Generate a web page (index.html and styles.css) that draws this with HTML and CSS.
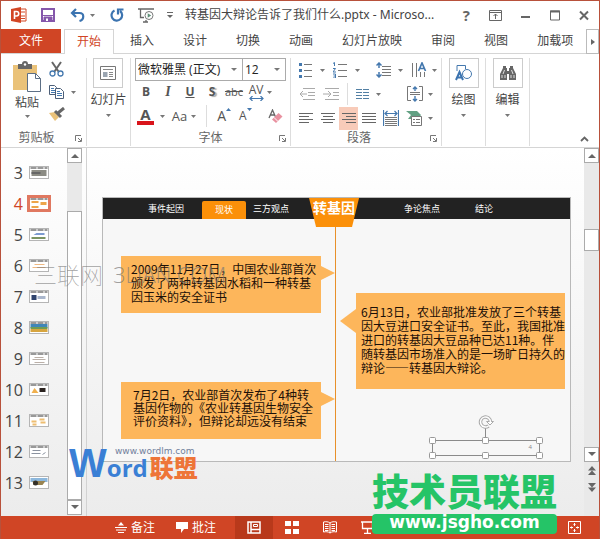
FILE: index.html
```html
<!DOCTYPE html>
<html lang="zh-CN">
<head>
    <meta charset="UTF-8">
    <meta name="viewport" content="width=device-width, initial-scale=1.0">
    <title>转基因大辩论告诉了我们什么.pptx</title>
    <link rel="stylesheet" href="styles.css">
</head>
<body>
    <div class="window">

        <header class="titlebar">
            <svg class="app-icon" width="16" height="16" viewBox="0 0 16 16"><path d="M8 2h7v12H8z" fill="#fff" stroke="#d24625"/><path d="M10 5h4M10 9h4M10 11.500h4" stroke="#d24625"/><path d="M0 2l10-2v16L0 14z" fill="#d24625"/><path d="M3.500 12V4.500H5.500a2 2 0 0 1 0 4.500H3.500" fill="none" stroke="#fff" stroke-width="1.600"/></svg>
            <button class="icon-btn save" aria-label="保存"><svg width="14" height="14" viewBox="0 0 14 14"><path d="M1 1h12v12H1z" fill="none" stroke="#8557ab" stroke-width="2"/><path d="M2 7.500h10M3 9h8v4H3z" stroke="#8557ab" fill="#8557ab"/><path d="M5 10.500h2V13H5z" fill="#fff"/></svg></button>
            <button class="icon-btn undo" aria-label="撤消"><svg width="15" height="14" viewBox="0 0 15 14"><path d="M6 1L2 5l4 4M2 5h7.500c5 0 5 6.500 0 8" fill="none" stroke="#3c74b0" stroke-width="2.200"/></svg><svg class="caret" viewBox="0 0 5 3"><path d="M0 0h5L2.500 3z"/></svg></button>
            <button class="icon-btn redo" aria-label="重复"><svg width="14" height="14" viewBox="0 0 14 14"><path d="M4.500 2.500a5.300 5.300 0 1 0 5.500.5M8 6.500V1.500h5.500" fill="none" stroke="#3c74b0" stroke-width="2.200"/></svg></button>
            <button class="icon-btn show" aria-label="从头开始"><svg width="17" height="15" viewBox="0 0 17 15"><path d="M0 1h16M2.500 1v8.500H6M5 14h5M8 12v2" fill="none" stroke="#666" stroke-width="1.300"/><circle cx="11" cy="7.500" r="4" fill="#fff" stroke="#777"/><path d="M9.700 5.300v4.400l3.500-2.200z" fill="#5f8f78"/></svg></button>
            <button class="icon-btn more" aria-label="自定义"><svg width="6" height="6" viewBox="0 0 6 6"><path d="M0 .5h6" stroke="#666"/><path d="M0 3h6L3 6z" fill="#666"/></svg></button>
            <h1>转基因大辩论告诉了我们什么.pptx - Microso...</h1>
            <div class="window-buttons">
                <button class="help" aria-label="帮助">?</button>
                <button aria-label="功能区选项"><svg width="13" height="11" viewBox="0 0 13 11"><path d="M.5.5h12v10H.5zM.5 2.500h12M6.500 9V4M4.500 6l2-2 2 2" fill="none" stroke="#666"/></svg></button>
                <button aria-label="最小化"><svg width="10" height="11" viewBox="0 0 10 11"><path d="M0 7h9" stroke="#666" stroke-width="2"/></svg></button>
                <button aria-label="最大化"><svg width="10" height="11" viewBox="0 0 10 11"><path d="M.5 1h9v9h-9z" fill="none" stroke="#666"/><path d="M0 1.500h10" stroke="#666" stroke-width="2"/></svg></button>
                <button aria-label="关闭"><svg width="10" height="11" viewBox="0 0 10 11"><path d="M1 1.500l8 8M9 1.500l-8 8" stroke="#666" stroke-width="2"/></svg></button>
            </div>
        </header>

        <nav class="tabs">
            <button class="tab file">文件</button>
            <button class="tab active">开始</button>
            <button class="tab">插入</button>
            <button class="tab">设计</button>
            <button class="tab">切换</button>
            <button class="tab">动画</button>
            <button class="tab">幻灯片放映</button>
            <button class="tab">审阅</button>
            <button class="tab">视图</button>
            <button class="tab last">加载项</button>
            <button class="tab-scroll" aria-label="更多选项卡"><svg width="4" height="6" viewBox="0 0 4 6"><path d="M0 0l4 3-4 3z" fill="#666"/></svg></button>
        </nav>

        <section class="ribbon">
            <div class="group clipboard">
                <div class="group-body">
                    <button class="big-btn paste">
                        <svg width="28" height="32" viewBox="0 0 28 32"><path d="M0 4h24v25H0z" fill="#eac279"/><path d="M5 3h4a3 3 0 0 1 6 0h4v5H5z" fill="#666"/><circle cx="12" cy="3.500" r="1.200" fill="#fff"/><path d="M14.500 12.500h8l5 5v13h-13z" fill="#fff" stroke="#5d6f85"/><path d="M22.500 12.500v5h5" fill="none" stroke="#5d6f85"/></svg>
                        <span>粘贴</span>
                        <svg class="caret" viewBox="0 0 5 3"><path d="M0 0h5L2.500 3z"/></svg>
                    </button>
                    <div class="clip-tools">
                        <button class="icon-btn" aria-label="剪切"><svg width="15" height="16" viewBox="0 0 15 16"><path d="M3 1l6.500 9.500M12 1L5.500 10.500" stroke="#666" stroke-width="2"/><circle cx="3.500" cy="12.500" r="2.500" fill="none" stroke="#4478ae" stroke-width="1.300"/><circle cx="11.500" cy="12.500" r="2.500" fill="none" stroke="#4478ae" stroke-width="1.300"/></svg></button>
                        <button class="icon-btn" aria-label="复制"><svg width="16" height="14" viewBox="0 0 16 14"><path d="M.5.5h5l2 2v7h-7z" fill="#fff" stroke="#4d5f78"/><path d="M2 3.500h3M2 5.500h4M2 7.500h4" stroke="#4478ae"/><path d="M6.500 3.500h5l3 3v7h-8z" fill="#fff" stroke="#4d5f78"/><path d="M8 6.500h3M8 8.500h5M8 10.500h5" stroke="#4478ae"/></svg><svg class="caret" viewBox="0 0 5 3"><path d="M0 0h5L2.500 3z"/></svg></button>
                        <button class="icon-btn" aria-label="格式刷"><svg width="16" height="14" viewBox="0 0 16 14"><path d="M0 6l6-1 4 5-4 4z" fill="#eac279"/><path d="M6 4l6 6M9 6l6-5" stroke="#666" stroke-width="3"/></svg></button>
                    </div>
                </div>
                <div class="group-label">剪贴板<svg class="launcher" viewBox="0 0 7 7"><path d="M.5 6V.5H6M3 3l3 3M6.500 3v3.500H3" /></svg></div>
            </div>

            <div class="group slides">
                <button class="big-btn">
                    <span class="frame"><svg width="16" height="14" viewBox="0 0 16 14"><path d="M.5.5h15v13H.5z" fill="#fff" stroke="#777"/><path d="M3 3.500h10M9 6.500h4M9 8.500h4M9 10.500h4" stroke="#888"/><path d="M3 6h4.500v5H3z" fill="#9aa5b1"/></svg></span>
                    <span>幻灯片</span>
                    <svg class="caret" viewBox="0 0 5 3"><path d="M0 0h5L2.500 3z"/></svg>
                </button>
            </div>

            <div class="group font">
                <div class="selects">
                    <div class="select family"><select aria-label="字体"><option>微软雅黑 (正文)</option></select></div>
                    <div class="select size"><select aria-label="字号"><option>12</option></select></div>
                </div>
                <div class="tools">
                    <button class="letter bold">B</button>
                    <button class="letter italic">I</button>
                    <button class="letter underline">U</button>
                    <button class="letter shadow">S</button>
                    <button class="letter strike">abc</button>
                    <button class="letter spacing">AV<svg width="15" height="5" viewBox="0 0 15 5"><path d="M1 2.500h13M3.500 0L1 2.500 3.500 5M11.500 0L14 2.500 11.500 5" fill="none" stroke="#4478ae" stroke-width="1.200"/></svg></button>
                    <svg class="caret" viewBox="0 0 5 3"><path d="M0 0h5L2.500 3z"/></svg>
                </div>
                <div class="tools second">
                    <button class="letter color">A</button>
                    <svg class="caret" viewBox="0 0 5 3"><path d="M0 0h5L2.500 3z"/></svg>
                    <button class="letter case">Aa</button>
                    <svg class="caret" viewBox="0 0 5 3"><path d="M0 0h5L2.500 3z"/></svg>
                    <i class="rule"></i>
                    <button class="letter grow">A<svg class="mark" viewBox="0 0 5 3"><path d="M0 3h5L2.500 0z"/></svg></button>
                    <button class="letter shrink">A<svg class="mark" viewBox="0 0 5 3"><path d="M0 0h5L2.500 3z"/></svg></button>
                    <button class="letter clear" aria-label="清除格式"><svg width="15" height="15" viewBox="0 0 15 15"><path d="M1 9L4.500 1 8 9M2.500 6h4" fill="none" stroke="#666" stroke-width="1.300"/><path d="M4 10.500L10.500 4 14.500 7.500 8 14z" fill="#e991a0"/><path d="M6 8.500l4 4" stroke="#fff"/></svg></button>
                </div>
                <div class="group-label">字体<svg class="launcher" viewBox="0 0 7 7"><path d="M.5 6V.5H6M3 3l3 3M6.500 3v3.500H3" /></svg></div>
            </div>

            <div class="group paragraph">
                <div class="para-row">
                    <button class="icon-btn" aria-label="项目符号"><svg width="14" height="16" viewBox="0 0 14 16"><path d="M0 1h3v3H0zM0 7h3v3H0zM0 13h3v3H0z" fill="#4478ae"/><path d="M5 2.500h8M5 8.500h8M5 14.500h8" stroke="#777"/></svg><svg class="caret" viewBox="0 0 5 3"><path d="M0 0h5L2.500 3z"/></svg></button>
                    <button class="icon-btn" aria-label="编号"><svg width="15" height="16" viewBox="0 0 15 16"><path d="M0 1.500L1.500.500V4M0 6.500h2.500L0 10h3M0 12h2.500v4H0M.5 14h2" fill="none" stroke="#4478ae"/><path d="M5 2.500h9M5 8.500h9M5 14.500h9" stroke="#777"/></svg><svg class="caret" viewBox="0 0 5 3"><path d="M0 0h5L2.500 3z"/></svg></button>
                    <i class="rule"></i>
                    <button class="icon-btn" aria-label="行距"><svg width="15" height="16" viewBox="0 0 15 16"><path d="M3 1v5M.5 3.500L3 1l2.500 2.500M3 10v5M.5 12.500L3 15l2.500-2.500" fill="none" stroke="#4478ae" stroke-width="1.500"/><path d="M6 4.500h9M6 7.500h9M6 10.500h9M6 13.500h9" stroke="#777"/></svg><svg class="caret" viewBox="0 0 5 3"><path d="M0 0h5L2.500 3z"/></svg></button>
                    <button class="icon-btn push" aria-label="文字方向"><svg width="16" height="16" viewBox="0 0 16 16"><path d="M1.500 1v14M5.500 1v14M9.500 10v5M13.500 10v5" stroke="#777"/><path d="M7.500 9L11 1l3.500 8M9 6.500h4" fill="none" stroke="#4478ae" stroke-width="1.700"/></svg><svg class="caret" viewBox="0 0 5 3"><path d="M0 0h5L2.500 3z"/></svg></button>
                </div>
                <div class="para-row">
                    <button class="icon-btn" aria-label="减少缩进"><svg width="16" height="12" viewBox="0 0 16 12"><path d="M4 .5h12M9 4.500h7M9 7.500h7M4 11.500h12M1 6h7M4 3L1 6l3 3" fill="none" stroke="#aaa"/></svg></button>
                    <button class="icon-btn" aria-label="增加缩进"><svg width="16" height="12" viewBox="0 0 16 12"><path d="M2 .5h14M10 4.500h6M10 7.500h6M2 11.500h14M0 6h8M5 3l3 3-3 3" fill="none" stroke="#aaa"/></svg></button>
                    <i class="rule"></i>
                    <button class="icon-btn" aria-label="分栏"><svg width="13" height="12" viewBox="0 0 13 12"><path d="M0 1.500h6M7 1.500h6M0 4.500h6M7 4.500h6M0 7.500h6M7 7.500h6M0 10.500h6M7 10.500h6" stroke="#5380a4"/></svg><svg class="caret" viewBox="0 0 5 3"><path d="M0 0h5L2.500 3z"/></svg></button>
                    <button class="icon-btn push" aria-label="对齐文本"><svg width="16" height="16" viewBox="0 0 16 16"><path d="M4 .5H.5v14H4M12 .5h3.500v14H12M3 6.500h10M3 8.500h10" fill="none" stroke="#777"/><path d="M8 1v4M6 3l2-2 2 2M8 10v5M6 13l2 2 2-2" fill="none" stroke="#4478ae" stroke-width="1.400"/></svg><svg class="caret" viewBox="0 0 5 3"><path d="M0 0h5L2.500 3z"/></svg></button>
                </div>
                <div class="para-row">
                    <button class="icon-btn align" aria-label="左对齐"><svg width="14" height="11" viewBox="0 0 14 11"><path d="M0 .5h14M0 3.500h10M0 6.500h14M0 9.500h10" stroke="#666"/></svg></button>
                    <button class="icon-btn align" aria-label="居中"><svg width="14" height="11" viewBox="0 0 14 11"><path d="M0 .5h14M2 3.500h10M0 6.500h14M2 9.500h10" stroke="#666"/></svg></button>
                    <button class="icon-btn align on" aria-label="右对齐"><svg width="14" height="11" viewBox="0 0 14 11"><path d="M0 .5h14M4 3.500h10M0 6.500h14M4 9.500h10" stroke="#666"/></svg></button>
                    <button class="icon-btn align" aria-label="两端对齐"><svg width="14" height="11" viewBox="0 0 14 11"><path d="M0 .5h14M0 3.500h14M0 6.500h14M0 9.500h14" stroke="#666"/></svg></button>
                    <button class="icon-btn align" aria-label="分散对齐"><svg width="16" height="16" viewBox="0 0 16 16"><path d="M.5 0v16M15.500 0v16M2 3.500h12M4.500 1L2 3.500 4.500 6M11.500 1L14 3.500 11.500 6" fill="none" stroke="#4478ae" stroke-width="1.200"/><path d="M2 7.500h12M2 9.500h12M2 11.500h12M2 13.500h12M2 15.500h12" stroke="#777"/></svg></button>
                    <button class="icon-btn push" aria-label="转换为 SmartArt"><svg width="17" height="16" viewBox="0 0 17 16"><path d="M0 1h11l4 4-3 4H2l3-4z" fill="#62a083"/><path d="M5.500 6.500h10v9h-10z" fill="#fff" stroke="#777"/><path d="M7 9.500h2M10 9.500h4M7 12.500h2M10 12.500h4" stroke="#777"/></svg><svg class="caret" viewBox="0 0 5 3"><path d="M0 0h5L2.500 3z"/></svg></button>
                </div>
                <div class="group-label">段落<svg class="launcher" viewBox="0 0 7 7"><path d="M.5 6V.5H6M3 3l3 3M6.500 3v3.500H3" /></svg></div>
            </div>

            <div class="group drawing">
                <button class="big-btn">
                    <span class="frame"><svg width="18" height="16" viewBox="0 0 18 16"><path d="M2 6V.5h8.500V4" fill="none" stroke="#4478ae"/><circle cx="12" cy="9" r="4.500" fill="none" stroke="#4478ae"/><path d="M1 15L4.500 7 8 15M2.500 12.500h4" fill="none" stroke="#3c74b0" stroke-width="2"/></svg></span>
                    <span>绘图</span>
                    <svg class="caret" viewBox="0 0 5 3"><path d="M0 0h5L2.500 3z"/></svg>
                </button>
            </div>

            <div class="group editing">
                <button class="big-btn">
                    <span class="frame"><svg width="16" height="14" viewBox="0 0 16 14"><path d="M3 0h3v2h1v3h2V2h1V0h3v2l3 6v6H9V8H7v6H0V8l3-6z" fill="#666"/><path d="M2 9v3M4.500 4L3 8M14 9v3M11.500 4L13 8M5 9v3M11 9v3" stroke="#ddd"/></svg></span>
                    <span>编辑</span>
                    <svg class="caret" viewBox="0 0 5 3"><path d="M0 0h5L2.500 3z"/></svg>
                </button>
            </div>
            <button class="collapse" aria-label="折叠功能区"><svg width="9" height="6" viewBox="0 0 9 6"><path d="M1 5l3.500-3.500L8 5" fill="none" stroke="#666" stroke-width="1.800"/></svg></button>
        </section>

        <main class="workspace">
            <aside class="thumbs">
                <ol>
                    <li><span>3</span><svg class="thumb" viewBox="0 0 17 11"><path d="M0 1h17" stroke="#333" stroke-dasharray="6 1"/><path d="M1 3h15v6H1z" fill="#8c8c84"/><path d="M1 5h9v2H1z" fill="#666"/></svg></li>
                    <li class="current"><span>4</span><svg class="thumb" viewBox="0 0 17 11"><path d="M0 1h17" stroke="#333" stroke-dasharray="6 1"/><path d="M1 3h7v2H1zM10 4h6v3h-6zM1 8h7v2H1z" fill="#eda54a"/></svg></li>
                    <li><span>5</span><svg class="thumb" viewBox="0 0 17 11"><path d="M0 1h17" stroke="#333" stroke-dasharray="6 1"/><path d="M6 4h8v2H3z" fill="#7d9bd0"/><path d="M1 8h14v2H1z" fill="#7c9463"/></svg></li>
                    <li><span>6</span><svg class="thumb" viewBox="0 0 17 11"><path d="M0 1h17" stroke="#333" stroke-dasharray="6 1"/><path d="M4 4.500h10M2 7.500h13" stroke="#efb982"/></svg></li>
                    <li><span>7</span><svg class="thumb" viewBox="0 0 17 11"><path d="M0 1h17" stroke="#333" stroke-dasharray="6 1"/><path d="M1 4h5v5H1z" fill="#2f436d"/><path d="M7 5h8v3H7z" fill="#a9b6cc"/></svg></li>
                    <li><span>8</span><svg class="thumb" viewBox="0 0 17 11"><path d="M0 2h17v4H0z" fill="#3f86b8"/><path d="M0 5h17v2H0z" fill="#6f9b54"/><path d="M0 7h17v3H0z" fill="#d7a53f"/><path d="M0 1h17" stroke="#333" stroke-dasharray="6 1"/></svg></li>
                    <li><span>9</span><svg class="thumb" viewBox="0 0 17 11"><path d="M0 1h17" stroke="#333" stroke-dasharray="6 1"/><path d="M4 4.500h9M2 6.500h13M4 9.500h10" stroke="#bbb0a8"/></svg></li>
                    <li><span>10</span><svg class="thumb" viewBox="0 0 17 11"><path d="M0 1h17" stroke="#333" stroke-dasharray="6 1"/><path d="M1 9l3-5 4 5z" fill="#f0b04d"/><path d="M9 4h6v4H9z" fill="#2b2320"/></svg></li>
                    <li><span>11</span><svg class="thumb" viewBox="0 0 17 11"><path d="M0 1h17" stroke="#333" stroke-dasharray="6 1"/><path d="M1 6.500h5M9 4.500h5M10 7.500h5M2 9.500h4" stroke="#eebd70" stroke-width="2"/></svg></li>
                    <li><span>12</span><svg class="thumb" viewBox="0 0 17 11"><path d="M0 1h17" stroke="#333" stroke-dasharray="6 1"/><path d="M2 4.500h8M1 7.500h9M12 8.500l3-2" stroke="#8b93a0"/></svg></li>
                    <li><span>13</span><svg class="thumb" viewBox="0 0 17 11"><path d="M0 1h17v4H0z" fill="#8cb7dc"/><path d="M2 4h13l-3 4H3z" fill="#998452"/><circle cx="5" cy="6" r="2.500" fill="#332f28"/></svg></li>
                </ol>
                <div class="scrollbar left">
                    <button aria-label="向上"><svg width="8" height="5" viewBox="0 0 8 5"><path d="M0 5h8L4 1z"/></svg></button>
                    <div class="track"><div class="grip"></div></div>
                    <button aria-label="向下"><svg width="8" height="5" viewBox="0 0 8 5"><path d="M0 0h8L4 4z"/></svg></button>
                </div>
            </aside>

            <section class="editor">
                <div class="slide">
                    <div class="slide-nav">
                        <span class="n1">事件起因</span>
                        <span class="n2">现状</span>
                        <span class="n3">三方观点</span>
                        <strong>转基因</strong>
                        <span class="n4">争论焦点</span>
                        <span class="n5">结论</span>
                    </div>
                    <div class="axis"></div>
                    <div class="note note-a">2009年11月27日，中国农业部首次<br>颁发了两种转基因水稻和一种转基<br>因玉米的安全证书</div>
                    <div class="note note-b">6月13日，农业部批准发放了三个转基<br>因大豆进口安全证书。至此，我国批准<br>进口的转基因大豆品种已达11种。伴<br>随转基因市场准入的是一场旷日持久的<br>辩论——转基因大辩论。</div>
                    <div class="note note-c">7月2日，农业部首次发布了4种转<br>基因作物的《农业转基因生物安全<br>评价资料》，但辩论却远没有结束</div>
                    <div class="selection">
                        <svg width="114" height="44" viewBox="0 0 114 44"><path d="M3.500 25.500h107v15H3.500zM56.500 13v12" fill="none" stroke="#8b8b8b"/><g fill="#fff" stroke="#999"><rect x=".5" y="22.500" width="6" height="6" rx="1"/><rect x="53.500" y="22.500" width="6" height="6" rx="1"/><rect x="107.500" y="22.500" width="6" height="6" rx="1"/><rect x=".5" y="37.500" width="6" height="6" rx="1"/><rect x="53.500" y="37.500" width="6" height="6" rx="1"/><rect x="107.500" y="37.500" width="6" height="6" rx="1"/></g><path d="M59.500 11a5 5 0 1 1 2-4" fill="none" stroke="#aaa" stroke-width="3.500"/><path d="M57.500 6.500h7L61 10z" fill="#fff" stroke="#aaa"/><path d="M59.500 11a5 5 0 1 1 2-4" fill="none" stroke="#fff" stroke-width="1.500"/></svg>
                        <span>4</span>
                    </div>
                </div>
            </section>

            <div class="scrollbar right">
                <button aria-label="向上"><svg width="8" height="5" viewBox="0 0 8 5"><path d="M0 5h8L4 1z"/></svg></button>
                <div class="track"><div class="grip"></div></div>
                <button aria-label="向下"><svg width="8" height="5" viewBox="0 0 8 5"><path d="M0 0h8L4 4z"/></svg></button>
                <button class="page" aria-label="上一张"><svg width="8" height="9" viewBox="0 0 8 9"><path d="M0 4.500h8L4 0zM0 9h8L4 4.500z"/></svg></button>
                <button class="page" aria-label="下一张"><svg width="8" height="9" viewBox="0 0 8 9"><path d="M0 0h8L4 4.500zM0 4.500h8L4 9z"/></svg></button>
            </div>
        </main>

        <footer class="statusbar">
            <button class="notes"><svg width="12" height="11" viewBox="0 0 12 11"><path d="M0 5.500h12M1 8h10M3 10.500h6" stroke="#fff"/><path d="M3 3.500h6L6 0z" fill="#fff"/></svg>备注</button>
            <button class="comments"><svg width="12" height="11" viewBox="0 0 12 11"><path d="M0 0h12v7H8l-3 4V7H0z" fill="#fff"/></svg>批注</button>
            <button class="view on" aria-label="普通视图"><svg width="14" height="13" viewBox="0 0 14 13"><path d="M1 1h12v11H1zM4 1v11M4 8.500h9" fill="none" stroke="#fff" stroke-width="1.500"/><path d="M6.500 3.500h4v2h-4z" fill="none" stroke="#fff"/></svg></button>
            <button class="view" aria-label="幻灯片浏览"><svg width="14" height="13" viewBox="0 0 14 13"><path d="M0 0h6v5H0zM8 0h6v5H8zM0 8h6v5H0zM8 8h6v5H8z" fill="#fff"/></svg></button>
            <button class="view" aria-label="阅读视图"><svg width="14" height="13" viewBox="0 0 14 13"><path d="M7 2C5 .5 3 .5.500 1v10c2.500-.5 4.500-.5 6.500 1 2-1.500 4-1.500 6.500-1V1C11 .5 9 .5 7 2v10M2 3.500h3.500M2 5.500h3.500M2 7.500h3.500M2 9.500h3.500M8.500 3.500H12M8.500 5.500H12M8.500 7.500H12M8.500 9.500H12" fill="none" stroke="#fff"/></svg></button>
            <button class="view" aria-label="幻灯片放映"><svg width="14" height="13" viewBox="0 0 14 13"><path d="M0 1h13M1.500 1v6.500h10V1M6.500 8v4M3 12.500h7" fill="none" stroke="#fff" stroke-width="1.300"/></svg></button>
            <button class="fit" aria-label="适应窗口"><svg width="13" height="13" viewBox="0 0 13 13"><path d="M.5.5h12v12H.5z" fill="none" stroke="#fff"/><path d="M6.500 2v3M6.500 8v3M2 6.500h3M8 6.500h3M5.500 3.500h2M5.500 9.500h2M3.500 5.500v2M9.500 5.500v2" stroke="#fff"/></svg></button>
        </footer>

        <div class="mark-lian">三联网 <span>3LIAN.COM</span></div>
        <div class="mark-word">
            <b class="w">W</b><b class="ord">ord</b><b class="cn">联盟</b>
            <small>www.wordlm.com</small>
        </div>
        <div class="mark-jsy">
            <b>技术员联盟</b>
            <span>www.jsgho.com</span>
        </div>
    </div>
</body>
</html>
```

FILE: styles.css
```css
* {
    box-sizing: border-box;
}
body {
    margin: 0;
    font-family: "Open Sans", "Noto Sans CJK SC", sans-serif;
    font-size: 12px;
    line-height: 16px;
    color: #444;
}
button {
    padding: 0;
    border: none;
    background: none;
    font: inherit;
    color: inherit;
    white-space: nowrap;
}
svg {
    display: block;
    flex: none;
}
.window {
    position: relative;
    display: flex;
    flex-direction: column;
    height: 100vh;
    overflow: hidden;
    border: 1px solid #b8513b;
    border-bottom: none;
    background: #fff;
}
.caret {
    width: 5px;
    height: 3px;
    fill: #777;
}
.icon-btn {
    display: flex;
    align-items: center;
}

/* title bar */
.titlebar {
    display: flex;
    align-items: center;
    height: 28px;
    padding: 0 10px;
}
.save {
    margin-left: 14px;
}
.undo {
    margin-left: 15px;
    gap: 5px;
}
.redo {
    margin-left: 15px;
}
.show {
    margin-left: 14px;
}
.more {
    margin-left: 12px;
}
.titlebar h1 {
    margin: 0 0 0 12px;
    font-family: "Noto Sans", "Noto Sans CJK SC", sans-serif;
    font-size: 12px;
    font-weight: normal;
    white-space: nowrap;
}
.window-buttons {
    display: flex;
    align-items: center;
    gap: 19px;
    margin-left: auto;
}
.help {
    font-size: 15px;
    font-weight: bold;
    color: #666;
}

/* tabs */
.tabs {
    display: flex;
    gap: 3px;
    height: 25px;
    border-bottom: 1px solid #d5d5d5;
}
.tab {
    flex: none;
    height: 24px;
    padding: 0 13px;
}
.tab.file {
    width: 60px;
    background: #d04525;
    color: #fff;
}
.tab.active {
    height: 25px;
    padding: 0 12px;
    border: 1px solid #d5d5d5;
    border-bottom: none;
    background: #fff;
    color: #d04525;
}
.tab.last {
    padding-right: 8px;
}
.tab-scroll {
    display: flex;
    flex: none;
    align-items: center;
    justify-content: center;
    width: 13px;
    height: 25px;
    margin-left: auto;
    border: 1px solid #bbb;
}

/* ribbon */
.ribbon {
    display: flex;
    height: 94px;
    padding: 4px 0 1px;
    border-bottom: 1px solid #d5d5d5;
}
.group {
    display: flex;
    flex-direction: column;
    border-right: 1px solid #ddd;
}
.group-body {
    display: flex;
    gap: 8px;
}
.group-label {
    display: flex;
    align-items: center;
    justify-content: center;
    margin-top: auto;
    position: relative;
    color: #666;
}
.launcher {
    position: absolute;
    right: 4px;
    bottom: 4px;
    width: 7px;
    height: 7px;
    fill: none;
    stroke: #777;
}
.clipboard {
    width: 86px;
    padding-left: 12px;
}
.clipboard .group-label {
    padding-right: 26px;
}
.slides,
.drawing,
.editing {
    width: 44px;
    align-items: center;
}
.big-btn {
    display: flex;
    flex-direction: column;
    align-items: center;
    gap: 4px;
}
.paste {
    gap: 2px;
    padding-top: 3px;
}
.frame {
    display: flex;
    align-items: center;
    justify-content: center;
    width: 30px;
    height: 30px;
    border: 1px solid #ccc;
}
.big-btn .caret {
    margin-top: 2px;
}
.clip-tools {
    display: flex;
    flex-direction: column;
    gap: 8px;
    padding-top: 3px;
}
.clip-tools .icon-btn {
    gap: 6px;
}

.font {
    width: 160px;
}
.selects {
    display: flex;
    padding-left: 4px;
}
.select {
    position: relative;
    height: 23px;
    border: 1px solid #ababab;
}
.select::after {
    content: "";
    position: absolute;
    right: 5px;
    top: 9px;
    border: 3px solid transparent;
    border-top-color: #777;
    border-bottom: none;
}
.select select {
    width: 100%;
    height: 100%;
    padding: 0 2px;
    border: none;
    background: none;
    appearance: none;
    font: inherit;
    color: #222;
}
.family {
    width: 108px;
}
.size {
    width: 43px;
    border-left: none;
}
.tools {
    display: flex;
    align-items: center;
    height: 22px;
    padding-left: 4px;
}
.tools.second {
    height: 26px;
}
.letter {
    width: 22px;
    color: #555;
}
.bold,
.underline,
.shadow {
    font-weight: bold;
}
.underline {
    text-decoration: underline;
}
.italic {
    font-family: "Liberation Serif", serif;
    font-size: 14px;
    font-style: italic;
    font-weight: bold;
}
.shadow {
    text-shadow: 2px 1px 1px #aaa;
}
.strike {
    font-size: 11px;
    text-decoration: line-through;
}
.spacing {
    display: flex;
    flex-direction: column;
    align-items: center;
    line-height: 12px;
}
.color {
    width: 17px;
    margin: 0 6px 0 2px;
    border-bottom: 4px solid #d9141b;
    font-size: 15px;
    font-weight: bold;
    line-height: 13px;
}
.case {
    width: 20px;
    margin: 0 2px 0 5px;
    font-size: 13px;
}
.tools .rule {
    margin: 0 10px;
}
.rule {
    width: 1px;
    height: 22px;
    background: #ddd;
}
.grow,
.shrink {
    display: flex;
    font-size: 14px;
}
.shrink {
    width: 30px;
    font-size: 12px;
}
.mark {
    width: 5px;
    height: 3px;
    fill: #4478ae;
}

.paragraph {
    width: 151px;
    padding: 0 8px;
}
.paragraph .group-label {
    margin-right: -8px;
    padding-right: 22px;
}
.para-row {
    display: flex;
    align-items: center;
    gap: 8px;
    height: 24px;
}
.para-row .icon-btn {
    gap: 7px;
}
.para-row .align {
    justify-content: center;
    width: 14px;
    height: 23px;
}
.para-row .on {
    width: 22px;
    margin: 0 -4px;
    background: #f8cbb9;
}
.para-row .push {
    gap: 5px;
    margin-left: auto;
}
.collapse {
    align-self: flex-end;
    margin: 0 10px 4px auto;
}

/* workspace */
.workspace {
    display: flex;
    flex: 1;
    min-height: 0;
    background: linear-gradient(#fff, #ececec);
}
.thumbs {
    display: flex;
    width: 86px;
    border-right: 1px solid #d2d2d2;
}
.thumbs ol {
    width: 66px;
    margin: 0;
    padding: 9px 0 0;
    list-style: none;
}
.thumbs li {
    display: flex;
    align-items: center;
    gap: 6px;
    height: 31px;
    font-size: 16px;
}
.thumbs li span {
    width: 22px;
    text-align: right;
}
.thumb {
    width: 20px;
    height: 13px;
    border: 1px solid #b5b5b5;
    background: #fff;
}
.thumbs .current {
    gap: 4px;
    color: #d04525;
}
.current .thumb {
    width: 24px;
    height: 17px;
    border: 3px solid #e07860;
}
.scrollbar {
    display: flex;
    flex-direction: column;
    width: 15px;
    background: #e9e9e9;
}
.scrollbar button {
    display: flex;
    align-items: center;
    justify-content: center;
    height: 15px;
    border: 1px solid #ababab;
    background: #fff;
    fill: #666;
}
.scrollbar .page {
    height: 17px;
    border: none;
    background: none;
}
.track {
    display: flex;
    flex: 1;
    flex-direction: column;
}
.grip {
    border: 1px solid #ababab;
    background: #fff;
}
.left {
    margin-bottom: 1px;
}
.left .grip {
    flex: 1;
    margin-top: 48px;
}
.right .grip {
    height: 22px;
    margin-top: 66px;
}
.right {
    padding-bottom: 20px;
}
.editor {
    display: flex;
    flex: 1;
    padding: 49px 13px 54px 15px;
}

/* slide */
.slide {
    position: relative;
    flex: 1;
    border: 1px solid #b9b9b9;
    background: #f7f7f7;
    color: #1c1008;
}
.slide-nav {
    display: flex;
    align-items: center;
    height: 21px;
    background: #222;
    color: #fff;
    font-size: 9px;
    white-space: nowrap;
}
.n1 {
    margin-left: 45px;
}
.n2 {
    align-self: flex-end;
    width: 44px;
    height: 18px;
    margin-left: 18px;
    border-radius: 2px 2px 0 0;
    background: #fb9009;
    line-height: 18px;
    text-align: center;
}
.n3 {
    margin-left: 7px;
}
.slide-nav strong {
    align-self: flex-start;
    width: 50px;
    height: 29px;
    margin-left: 20px;
    background: #fb9009;
    clip-path: polygon(0 0, 100% 0, 86% 100%, 14% 100%);
    font-size: 14px;
    line-height: 19px;
    text-align: center;
}
.n4 {
    margin-left: 45px;
}
.n5 {
    margin-left: 35px;
}
.axis {
    position: absolute;
    top: 29px;
    bottom: 0;
    left: 232px;
    width: 1px;
    background: #e8902a;
}
.note {
    position: absolute;
    background: #fdb65b;
    font-family: "Noto Sans CJK SC", sans-serif;
    line-height: 14px;
    white-space: nowrap;
}
.note::after {
    content: "";
    position: absolute;
    top: 10px;
    left: 100%;
    border: 7px solid transparent;
    border-left: 14px solid #fdb65b;
    border-right: none;
}
.note-a {
    top: 58px;
    left: 18px;
    width: 200px;
    height: 57px;
    padding: 6px 10px;
}
.note-b {
    top: 95px;
    left: 253px;
    width: 209px;
    height: 96px;
    padding: 12px 5px;
}
.note-b::after {
    top: 16px;
    right: 100%;
    left: auto;
    border: 12px solid transparent;
    border-right: 16px solid #fdb65b;
    border-left: none;
}
.note-c {
    top: 184px;
    left: 18px;
    width: 200px;
    height: 57px;
    padding: 6px 12px;
    line-height: 13px;
}
.selection {
    position: absolute;
    top: 217px;
    left: 326px;
}
.selection span {
    position: absolute;
    right: 11px;
    top: 24px;
    color: #888;
    font-size: 6px;
}

/* status bar */
.statusbar {
    display: flex;
    align-items: center;
    height: 23px;
    padding: 0 18px 0 114px;
    background: #d04525;
    color: #fff;
}
.statusbar button {
    display: flex;
    align-items: center;
    justify-content: center;
    gap: 4px;
    height: 23px;
}
.comments {
    margin-left: 21px;
}
.view {
    width: 38px;
}
.view.on {
    margin-left: 19px;
    background: #b8391b;
}
.statusbar .fit {
    margin-left: auto;
}

/* watermarks over the window */
.mark-lian {
    position: absolute;
    top: 260px;
    left: 33px;
    display: flex;
    gap: 10px;
    color: rgba(120, 120, 120, 0.7);
    font-family: "Noto Sans CJK SC", sans-serif;
    font-size: 23px;
    font-weight: 100;
    line-height: 26px;
    white-space: nowrap;
}
.mark-lian span {
    font-family: "Open Sans", sans-serif;
    font-size: 22px;
    font-weight: 300;
}
.mark-word {
    position: absolute;
    top: 440px;
    left: 68px;
    display: flex;
    align-items: baseline;
    color: #3a7fd5;
    line-height: 44px;
}
.mark-word .w {
    font-family: "Liberation Sans", sans-serif;
    font-size: 40px;
}
.mark-word .ord {
    font-size: 24px;
}
.mark-word .cn {
    margin-left: 2px;
    color: #ee7538;
    font-weight: 900;
    font-size: 24px;
}
.mark-word small {
    position: absolute;
    top: 4px;
    left: 46px;
    color: #71809c;
    font-family: "DejaVu Sans", sans-serif;
    font-size: 9px;
    line-height: 12px;
}
.mark-jsy {
    position: absolute;
    top: 470px;
    left: 371px;
    color: #25c467;
}
.mark-jsy b {
    display: block;
    font-size: 37px;
    font-weight: 900;
    line-height: 42px;
    white-space: nowrap;
}
.mark-jsy span {
    display: block;
    height: 20px;
    margin-top: 1px;
    border-radius: 4px;
    background: #25c467;
    color: #fff;
    font-family: "DejaVu Sans", sans-serif;
    font-size: 17px;
    font-weight: bold;
    line-height: 17px;
    text-align: center;
}
```
